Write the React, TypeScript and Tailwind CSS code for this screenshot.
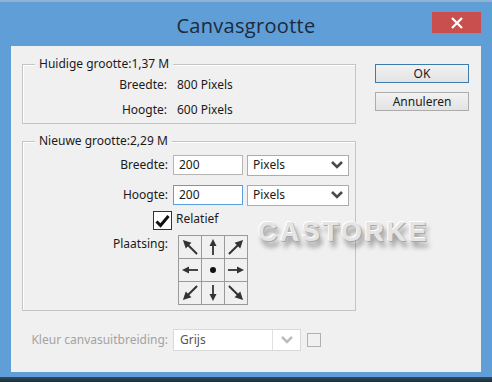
import React from "react";

function Arrow({ angle }: { angle: number }) {
  const diag = angle % 90 !== 0;
  return (
    <svg width="22" height="22" viewBox="0 0 22 22">
      <g transform={`rotate(${angle} 11 11)`}>
        {diag ? (
          <>
            <line x1={1} y1={11} x2={15} y2={11} stroke="#333333" strokeWidth="2" />
            <polygon points="21,11 13,7 13,15" fill="#333333" />
          </>
        ) : (
          <>
            <line x1={3} y1={11} x2={14} y2={11} stroke="#333333" strokeWidth="1.8" />
            <polygon points="19,11 12,7.5 12,14.5" fill="#333333" />
          </>
        )}
      </g>
    </svg>
  );
}

function Chevron({ color }: { color: string }) {
  return (
    <svg width="14" height="10" viewBox="0 0 14 10">
      <polyline points="2,2 7,7 12,2" fill="none" stroke={color} strokeWidth="2.6" />
    </svg>
  );
}

export default function App() {
  const angles = [225, 270, 315, 180, -1, 0, 135, 90, 45];
  return (
    <div className="relative w-[492px] h-[382px] bg-[#5f9ed6] overflow-hidden font-['Noto_Sans','Open_Sans',sans-serif] text-[12px] text-[#1a1a1a] border-t-[2px] border-t-[#8fb3d3]">
      {/* title bar */}
      <div className="relative h-[44px] flex items-center justify-center">
        <div className="text-[20px] text-[#1c2a3b] pt-[4px] tracking-[0.3px] font-['Open_Sans',sans-serif]">Canvasgrootte</div>
        <div className="absolute left-[432px] top-[10px] w-[49px] h-[21px] bg-[#c94f4f] flex items-center justify-center">
          <svg width="14" height="14" viewBox="0 0 14 14">
            <path d="M2 2 L12 12 M12 2 L2 12" stroke="#ffffff" strokeWidth="2.2" />
          </svg>
        </div>
      </div>

      {/* content */}
      <div className="ml-[11px] w-[470px] h-[326px] bg-[#f0f0f0] flex flex-col">
        <div className="flex pt-[18px]">
          <div className="ml-[11px] w-[334px] flex flex-col">
            {/* group 1 */}
            <div className="relative h-[60px] border border-[#c4c4c4] shadow-[inset_1px_1px_0_#ffffff] pt-[12px]">
              <div className="absolute -top-[9px] left-[12px] px-[4px] bg-[#f0f0f0] leading-[16px]">Huidige grootte:1,37 M</div>
              <div className="flex leading-[16px]">
                <div className="w-[144px] text-right">Breedte:</div>
                <div className="ml-[10px]">800 Pixels</div>
              </div>
              <div className="flex leading-[16px] mt-[9px]">
                <div className="w-[144px] text-right">Hoogte:</div>
                <div className="ml-[10px]">600 Pixels</div>
              </div>
            </div>

            {/* group 2 */}
            <div className="relative mt-[17px] h-[170px] border border-[#c4c4c4] shadow-[inset_1px_1px_0_#ffffff] pt-[13px]">
              <div className="absolute -top-[9px] left-[12px] px-[4px] bg-[#f0f0f0] leading-[16px]">Nieuwe grootte:2,29 M</div>
              <div className="flex items-center h-[20px]">
                <div className="w-[145px] text-right">Breedte:</div>
                <div className="ml-[5px] w-[70px] h-[20px] bg-white border border-[#b5b5b5] pl-[5px] leading-[18px]">200</div>
                <div className="ml-[4px] w-[102px] h-[21px] bg-white border border-[#acacac] flex items-center justify-between pl-[5px] pr-[4px]">
                  <span>Pixels</span>
                  <Chevron color="#4a4a4a" />
                </div>
              </div>
              <div className="flex items-center h-[20px] mt-[10px]">
                <div className="w-[145px] text-right">Hoogte:</div>
                <div className="ml-[5px] w-[70px] h-[20px] bg-white border border-[#5a9ee0] pl-[5px] leading-[18px]">200</div>
                <div className="ml-[4px] w-[102px] h-[21px] bg-white border border-[#acacac] flex items-center justify-between pl-[5px] pr-[4px]">
                  <span>Pixels</span>
                  <Chevron color="#4a4a4a" />
                </div>
              </div>
              <div className="flex items-center mt-[6px] ml-[130px] h-[19px]">
                <div className="w-[19px] h-[19px] bg-white border border-[#333333] flex items-center justify-center">
                  <svg width="15" height="14" viewBox="0 0 15 14">
                    <path d="M1.5 7.5 L5.5 11.5 L13.5 2" fill="none" stroke="#111111" strokeWidth="3" />
                  </svg>
                </div>
                <div className="ml-[4px] -mt-[4px]">Relatief</div>
              </div>
              <div className="flex items-start mt-[5px]">
                <div className="w-[145px] text-right pt-[1px] leading-[16px]">Plaatsing:</div>
                <div className="ml-[10px] grid grid-cols-3 border-l border-t border-[#9a9a9a] bg-[#f0f0f0]">
                  {angles.map((a, i) => (
                    <div key={i} className="w-[23px] h-[23px] border-r border-b border-[#9a9a9a] flex items-center justify-center">
                      {a < 0 ? (
                        <div className="w-[6px] h-[6px] rounded-full bg-[#111111]" />
                      ) : (
                        <Arrow angle={a} />
                      )}
                    </div>
                  ))}
                </div>
              </div>
            </div>
          </div>

          {/* buttons */}
          <div className="ml-[19px] w-[94px] flex flex-col">
            <div className="h-[19px] border border-[#3d7bad] bg-gradient-to-b from-[#f2f2f2] to-[#e3e3e3] flex items-center justify-center leading-[16px]">OK</div>
            <div className="mt-[9px] h-[19px] border border-[#acacac] bg-gradient-to-b from-[#f2f2f2] to-[#e3e3e3] flex items-center justify-center leading-[16px]">Annuleren</div>
          </div>
        </div>

        {/* bottom row */}
        <div className="flex items-center mt-[18px]">
          <div className="w-[157px] text-right text-[#a3a3a3]">Kleur canvasuitbreiding:</div>
          <div className="ml-[5px] w-[128px] h-[22px] bg-white border border-[#d9d9d9] flex">
            <div className="flex-1 pl-[6px] leading-[20px] text-[#555555] border-r border-[#e0e0e0]">Grijs</div>
            <div className="w-[27px] flex items-center justify-center">
              <Chevron color="#bdbdbd" />
            </div>
          </div>
          <div className="ml-[6px] w-[14px] h-[14px] border border-[#b0b0b0] bg-[#f0f0f0]" />
        </div>
      </div>

      <div className="absolute left-0 bottom-0 w-[492px] h-[5px] bg-gradient-to-b from-[#2f4d66] to-[#1c2c3a]" />

      {/* watermark */}
      <div className="absolute left-[258px] top-[210px] text-[27px] font-bold tracking-[2.5px] text-[#e4e4e4] font-['Liberation_Sans',Arial,sans-serif] [text-shadow:-1px_-1px_0_#ffffff,1px_1px_0_#a8a8a8,3px_6px_5px_rgba(0,0,0,0.4)]">
        CASTORKE
      </div>
    </div>
  );
}
